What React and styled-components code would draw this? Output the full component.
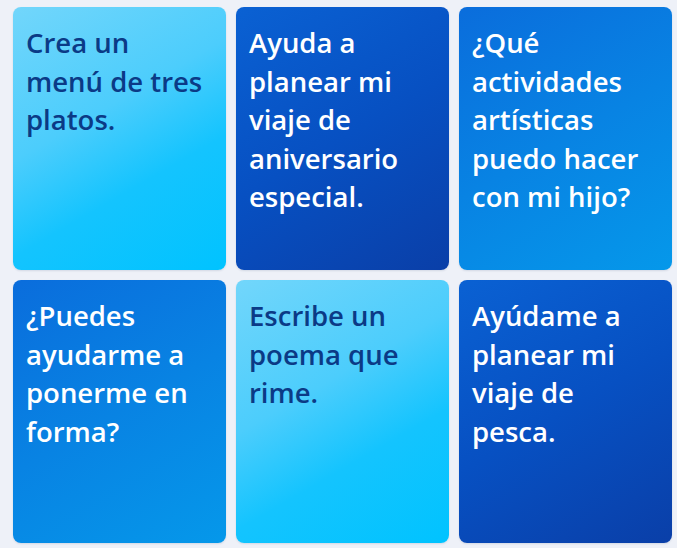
import React from "react";
import styled, { createGlobalStyle } from "styled-components";

const Global = createGlobalStyle`
  html, body { margin: 0; padding: 0; background: #eef1f8; }
  body { font-family: "Open Sans", "Noto Sans", sans-serif; }
`;

const Grid = styled.div`
  display: grid;
  grid-template-columns: repeat(3, 213px);
  grid-template-rows: repeat(2, 263px);
  gap: 10px;
  padding: 7px 0 0 13px;
  width: 677px;
  height: 548px;
  box-sizing: border-box;
  background: #eef1f8;
`;

const gradients = {
  light: "linear-gradient(150deg, #72d6fb 0%, #4ccdfc 40%, #14c4fe 65%, #00c3ff 100%)",
  dark: "linear-gradient(150deg, #0a61d3 0%, #0750c2 50%, #0a3fa8 100%)",
  mid: "linear-gradient(150deg, #0a6ddc 0%, #0883e3 50%, #0598ea 100%)",
};

const Card = styled.div`
  border-radius: 8px;
  background: ${(p) => gradients[p.$tone]};
  box-shadow: 0 1px 2px rgba(20, 40, 90, 0.12);
  padding: 17px 18px 0 13px;
  box-sizing: border-box;
`;

const Prompt = styled.p`
  margin: 0;
  font-family: "Open Sans", "Noto Sans", sans-serif;
  font-weight: 600;
  font-size: 27.5px;
  line-height: 38.5px;
  color: ${(p) => (p.$tone === "light" ? "#0b3a86" : "#ffffff")};
`;

const items = [
  { tone: "light", text: "Crea un menú de tres platos." },
  { tone: "dark", text: "Ayuda a planear mi viaje de aniversario especial." },
  { tone: "mid", text: "¿Qué actividades artísticas puedo hacer con mi hijo?" },
  { tone: "mid", text: "¿Puedes ayudarme a ponerme en forma?" },
  { tone: "light", text: "Escribe un poema que rime." },
  { tone: "dark", text: "Ayúdame a planear mi viaje de pesca." },
];

export default function App() {
  return (
    <>
      <Global />
      <Grid>
        {items.map((it, i) => (
          <Card key={i} $tone={it.tone}>
            <Prompt $tone={it.tone}>{it.text}</Prompt>
          </Card>
        ))}
      </Grid>
    </>
  );
}
